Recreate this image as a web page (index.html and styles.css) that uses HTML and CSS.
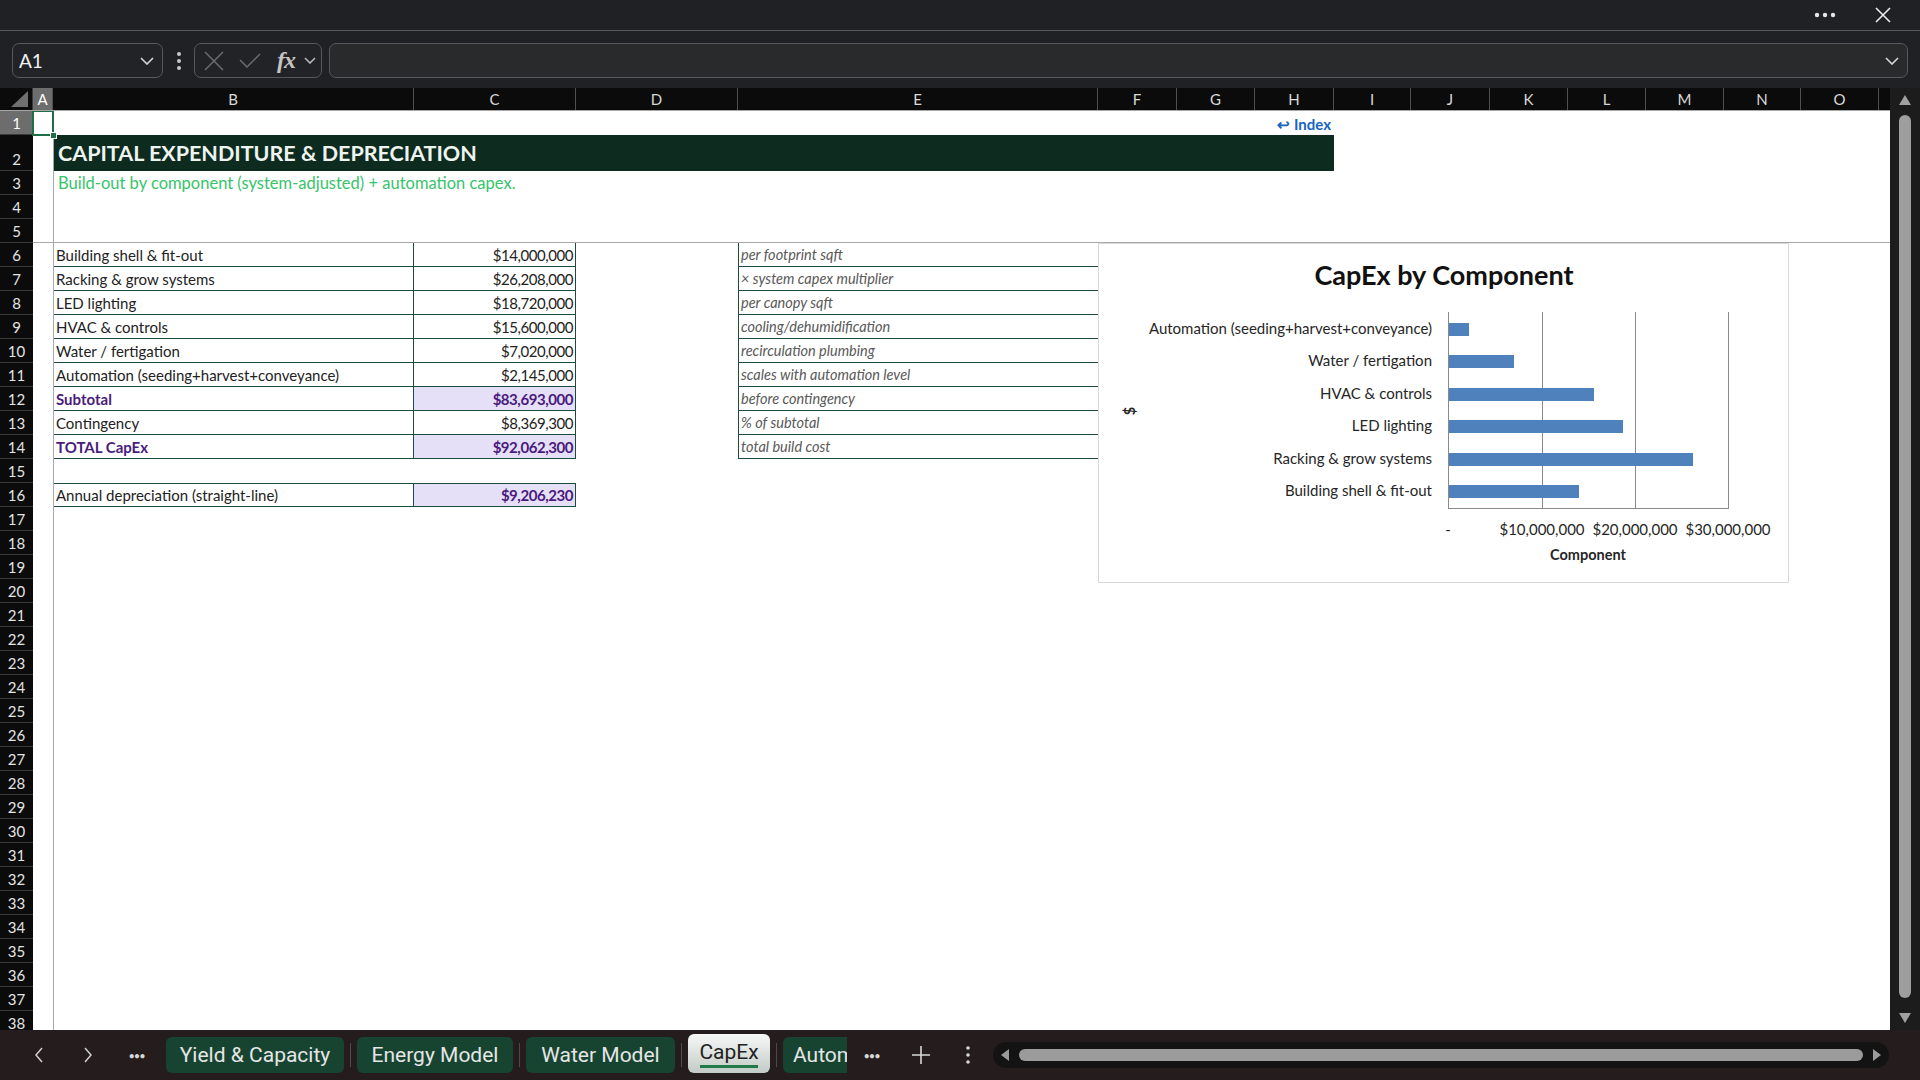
FILE: index.html
```html
<!DOCTYPE html>
<html lang="en">
<head>
    <meta charset="UTF-8">
    <meta name="viewport" content="width=device-width, initial-scale=1.0">
    <title>CapEx</title>
    <link rel="stylesheet" href="styles.css">
</head>
<body>
    <!-- window top -->
    <div class="titlebar">
        <svg class="more" width="22" height="6" viewBox="0 0 22 6"><circle cx="3" cy="3" r="2.2"/><circle cx="11" cy="3" r="2.2"/><circle cx="19" cy="3" r="2.2"/></svg>
        <svg class="close" width="18" height="18" viewBox="0 0 18 18"><path d="M2 2L16 16M16 2L2 16"/></svg>
    </div>

    <!-- formula bar -->
    <div class="formulabar">
        <div class="namebox">
            <span>A1</span>
            <svg class="chev" width="14" height="8" viewBox="0 0 14 8"><polyline points="1,1 7,7 13,1"/></svg>
        </div>
        <div class="vdots">
            <svg width="6" height="20" viewBox="0 0 6 20"><circle cx="3" cy="3" r="2"/><circle cx="3" cy="10" r="2"/><circle cx="3" cy="17" r="2"/></svg>
        </div>
        <div class="fxbox">
            <svg class="fx-x" width="20" height="20" viewBox="0 0 20 20"><path d="M1 1L19 19M19 1L1 19"/></svg>
            <svg class="fx-ok" width="22" height="17" viewBox="0 0 22 17"><polyline points="1,8 8,15 21,2"/></svg>
            <span class="fx">fx</span>
            <svg class="chev small" width="12" height="7" viewBox="0 0 12 7"><polyline points="1,1 6,6 11,1"/></svg>
        </div>
        <div class="fxinput">
            <svg class="chev" width="14" height="8" viewBox="0 0 14 8"><polyline points="1,1 7,7 13,1"/></svg>
        </div>
    </div>

    <!-- sheet -->
    <div class="sheet">
        <div class="grid">
            <div class="colheads">
                <div class="corner"><svg width="18" height="16" viewBox="0 0 18 16"><polygon points="17,0 17,16 0,16"/></svg></div>
                <div class="ch w-a sel">A</div>
                <div class="ch w-b">B</div>
                <div class="ch w-c">C</div>
                <div class="ch w-c">D</div>
                <div class="ch w-e">E</div>
                <div class="ch w-79">F</div>
                <div class="ch w-78">G</div>
                <div class="ch w-79">H</div>
                <div class="ch w-77">I</div>
                <div class="ch w-79">J</div>
                <div class="ch w-78">K</div>
                <div class="ch w-78">L</div>
                <div class="ch w-78">M</div>
                <div class="ch w-77">N</div>
                <div class="ch w-78">O</div>
                <div class="ch w-p"></div>
            </div>
            <div class="body">
                <div class="rowheads">
                    <div class="rh sel">1</div>
                    <div class="rh tall">2</div>
                    <div class="rh">3</div>
                    <div class="rh">4</div>
                    <div class="rh">5</div>
                    <div class="rh">6</div>
                    <div class="rh">7</div>
                    <div class="rh">8</div>
                    <div class="rh">9</div>
                    <div class="rh">10</div>
                    <div class="rh">11</div>
                    <div class="rh">12</div>
                    <div class="rh">13</div>
                    <div class="rh">14</div>
                    <div class="rh">15</div>
                    <div class="rh">16</div>
                    <div class="rh">17</div>
                    <div class="rh">18</div>
                    <div class="rh">19</div>
                    <div class="rh">20</div>
                    <div class="rh">21</div>
                    <div class="rh">22</div>
                    <div class="rh">23</div>
                    <div class="rh">24</div>
                    <div class="rh">25</div>
                    <div class="rh">26</div>
                    <div class="rh">27</div>
                    <div class="rh">28</div>
                    <div class="rh">29</div>
                    <div class="rh">30</div>
                    <div class="rh">31</div>
                    <div class="rh">32</div>
                    <div class="rh">33</div>
                    <div class="rh">34</div>
                    <div class="rh">35</div>
                    <div class="rh">36</div>
                    <div class="rh">37</div>
                    <div class="rh">38</div>
                </div>

                <div class="cells">
                    <div class="row r1">
                        <div class="a1"><span class="handle"></span></div>
                        <div class="index-link">↩ Index</div>
                    </div>
                    <div class="row r2">
                        <div class="banner">CAPITAL EXPENDITURE &amp; DEPRECIATION</div>
                    </div>
                    <div class="row r3">
                        <div class="subtitle">Build-out by component (system-adjusted) + automation capex.</div>
                    </div>
                    <div class="row r45"></div>

                    <div class="block">
                        <div class="tbl">
                            <div class="tr"><div class="td lbl">Building shell &amp; fit-out</div><div class="td num">$14,000,000</div></div>
                            <div class="tr"><div class="td lbl">Racking &amp; grow systems</div><div class="td num">$26,208,000</div></div>
                            <div class="tr"><div class="td lbl">LED lighting</div><div class="td num">$18,720,000</div></div>
                            <div class="tr"><div class="td lbl">HVAC &amp; controls</div><div class="td num">$15,600,000</div></div>
                            <div class="tr"><div class="td lbl">Water / fertigation</div><div class="td num">$7,020,000</div></div>
                            <div class="tr"><div class="td lbl">Automation (seeding+harvest+conveyance)</div><div class="td num">$2,145,000</div></div>
                            <div class="tr total"><div class="td lbl">Subtotal</div><div class="td num hl">$83,693,000</div></div>
                            <div class="tr"><div class="td lbl">Contingency</div><div class="td num">$8,369,300</div></div>
                            <div class="tr total"><div class="td lbl">TOTAL CapEx</div><div class="td num hl">$92,062,300</div></div>
                            <div class="tr empty"></div>
                            <div class="tr boxed"><div class="td lbl">Annual depreciation (straight-line)</div><div class="td num hl bold">$9,206,230</div></div>
                        </div>

                        <div class="notes">
                            <div class="note">per footprint sqft</div>
                            <div class="note">× system capex multiplier</div>
                            <div class="note">per canopy sqft</div>
                            <div class="note">cooling/dehumidification</div>
                            <div class="note">recirculation plumbing</div>
                            <div class="note">scales with automation level</div>
                            <div class="note">before contingency</div>
                            <div class="note">% of subtotal</div>
                            <div class="note">total build cost</div>
                        </div>

                        <!-- chart object -->
                        <div class="chart">
                            <svg width="689" height="338" viewBox="0 0 689 338">
                                <text class="c-title" x="345" y="41">CapEx by Component</text>

                                <g class="c-grid">
                                    <line x1="349.5" y1="68" x2="349.5" y2="264"/>
                                    <line x1="443.5" y1="68" x2="443.5" y2="264"/>
                                    <line x1="536.5" y1="68" x2="536.5" y2="264"/>
                                    <line x1="629.5" y1="68" x2="629.5" y2="264"/>
                                    <line x1="349" y1="264.5" x2="630" y2="264.5"/>
                                </g>

                                <g class="c-bars">
                                    <rect x="350" y="79" width="20" height="13"/>
                                    <rect x="350" y="111" width="65" height="13"/>
                                    <rect x="350" y="144" width="145" height="13"/>
                                    <rect x="350" y="176" width="174" height="13"/>
                                    <rect x="350" y="209" width="244" height="13"/>
                                    <rect x="350" y="241" width="130" height="13"/>
                                </g>

                                <g class="c-cat">
                                    <text x="333" y="90">Automation (seeding+harvest+conveyance)</text>
                                    <text x="333" y="122">Water / fertigation</text>
                                    <text x="333" y="155">HVAC &amp; controls</text>
                                    <text x="333" y="187">LED lighting</text>
                                    <text x="333" y="220">Racking &amp; grow systems</text>
                                    <text x="333" y="252">Building shell &amp; fit-out</text>
                                </g>

                                <g class="c-tick">
                                    <text x="349" y="291">-</text>
                                    <text x="443" y="291">$10,000,000</text>
                                    <text x="536" y="291">$20,000,000</text>
                                    <text x="629" y="291">$30,000,000</text>
                                </g>

                                <text class="c-axis" x="489" y="316">Component</text>
                                <text class="c-axis" x="0" y="0" transform="translate(36 167) rotate(-90)">$</text>
                            </svg>
                        </div>
                    </div>
                </div>
            </div>
        </div>

        <div class="vscroll">
            <svg class="arr" width="12" height="10" viewBox="0 0 12 10"><polygon points="6,0 12,10 0,10"/></svg>
            <div class="vthumb"></div>
            <svg class="arr" width="12" height="10" viewBox="0 0 12 10"><polygon points="0,0 12,0 6,10"/></svg>
        </div>
    </div>

    <!-- sheet tabs -->
    <div class="tabbar">
        <div class="nav"><svg width="10" height="16" viewBox="0 0 10 16"><polyline points="8,1 2,8 8,15"/></svg></div>
        <div class="nav"><svg width="10" height="16" viewBox="0 0 10 16"><polyline points="2,1 8,8 2,15"/></svg></div>
        <div class="nav dots">•••</div>

        <div class="tab t-yield">Yield &amp; Capacity</div>
        <span class="sep"></span>
        <div class="tab t-energy">Energy Model</div>
        <span class="sep"></span>
        <div class="tab t-water">Water Model</div>
        <span class="sep"></span>
        <div class="tab active">CapEx</div>
        <span class="sep"></span>
        <div class="tab t-auto">Automation</div>

        <div class="nav dots">•••</div>
        <div class="nav"><svg width="18" height="18" viewBox="0 0 18 18"><path d="M9 0V18M0 9H18"/></svg></div>
        <div class="nav kebab"><svg width="6" height="20" viewBox="0 0 6 20"><circle cx="3" cy="3" r="1.8"/><circle cx="3" cy="10" r="1.8"/><circle cx="3" cy="17" r="1.8"/></svg></div>

        <div class="hscroll">
            <svg class="harr" width="8" height="12" viewBox="0 0 8 12"><polygon points="8,0 8,12 0,6"/></svg>
            <div class="hthumb"></div>
            <svg class="harr" width="8" height="12" viewBox="0 0 8 12"><polygon points="0,0 8,6 0,12"/></svg>
        </div>
    </div>
</body>
</html>
```

FILE: styles.css
```css
*{
    box-sizing: border-box;
    margin: 0;
    padding: 0;
}
body{
    width: 1920px;
    height: 1080px;
    overflow: hidden;
    background-color: #1f2124;
    font-family: Lato, "Liberation Sans", sans-serif;
}

/* top */
.titlebar{
    height: 31px;
    border-bottom: 1px solid #55575b;
    display: flex;
    align-items: center;
    justify-content: flex-end;
    padding-right: 28px;
}
.more{
    fill: #e6e6e6;
    margin-right: 38px;
}
.close path{
    stroke: #ececec;
    stroke-width: 1.6;
}

/* formula bar */
.formulabar{
    height: 57px;
    display: flex;
    align-items: flex-start;
    padding: 12px 12px 0 12px;
}
.namebox,.fxbox,.fxinput{
    height: 35px;
    border: 1px solid #56585c;
    border-radius: 7px;
    display: flex;
    align-items: center;
}
.namebox{
    width: 151px;
    background-color: #222327;
    padding: 0 8px 0 6px;
    justify-content: space-between;
    color: #f2f2f2;
    font-size: 19px;
}
.chev polyline{
    fill: none;
    stroke: #d8d8d8;
    stroke-width: 1.6;
}
.chev.small polyline{
    stroke: #b8b8b8;
}
.vdots{
    width: 31px;
    height: 35px;
    display: flex;
    align-items: center;
    justify-content: center;
}
.vdots circle{
    fill: #c8c8c8;
}
.fxbox{
    width: 128px;
    padding-left: 9px;
    background-color: #222327;
}
.fx-x path,.fx-ok polyline{
    fill: none;
    stroke: #6c6c6c;
    stroke-width: 1.5;
}
.fx-ok{
    margin-left: 15px;
}
.fx{
    margin-left: 16px;
    font-family: "Liberation Serif", serif;
    font-style: italic;
    font-weight: bold;
    font-size: 24px;
    color: #c4c4c4;
    letter-spacing: -1px;
}
.fxbox .chev{
    margin-left: 9px;
}
.fxinput{
    flex: 1;
    margin-left: 7px;
    background-color: #292a2c;
    justify-content: flex-end;
    padding-right: 8px;
}

/* sheet */
.sheet{
    height: 942px;
    display: flex;
}
.grid{
    width: 1890px;
    display: flex;
    flex-direction: column;
}
.colheads{
    height: 23px;
    display: flex;
    background-color: #0b0b0b;
    border-bottom: 1px solid #a6a6a6;
}
.corner{
    width: 33px;
    display: flex;
    align-items: flex-end;
    justify-content: flex-end;
    padding: 0 3px 3px 0;
    border-right: 1px solid #3c3c3c;
}
.corner polygon{
    fill: #6f6f6f;
}
.ch{
    color: #d9d9d9;
    font-size: 15px;
    line-height: 22px;
    text-align: center;
    border-right: 1px solid #4f4f4f;
}
.ch.sel{
    background-color: #6d6d6d;
    color: #fff;
}
.w-a{width: 20px;}
.w-b{width: 361px;}
.w-c{width: 162px;}
.w-e{width: 360px;}
.w-77{width: 77px;}
.w-78{width: 78px;}
.w-79{width: 79px;}
.w-p{width: 11px; border-right: none;}

.body{
    flex: 1;
    display: flex;
    overflow: hidden;
}
.rowheads{
    width: 33px;
    flex-shrink: 0;
    background-color: #0b0b0b;
}
.rh{
    height: 24px;
    border-bottom: 1px solid #3a3a3a;
    color: #e3e3e3;
    font-size: 15px;
    line-height: 24px;
    text-align: center;
}
.rh.tall{
    height: 36px;
    padding-top: 12px;
}
.rh.sel{
    background-color: #6d6d6d;
    color: #fff;
}

.cells{
    flex: 1;
    background: linear-gradient(#a8a8a8, #a8a8a8) 20px 0 / 1px 100% no-repeat, #fff;
    color: #222;
    font-size: 15px;
}
.row{
    display: flex;
}
.r1{
    height: 24px;
}
.a1{
    position: relative;
    width: 20px;
    height: 24px;
    outline: 2px solid #1f6e47;
    outline-offset: -1px;
}
.handle{
    position: absolute;
    right: -4px;
    bottom: -4px;
    width: 7px;
    height: 7px;
    background-color: #1f6e47;
    border: 1px solid #fff;
}
.index-link{
    width: 1281px;
    text-align: right;
    padding-right: 3px;
    line-height: 26px;
    color: #1565c0;
    font-weight: bold;
    font-size: 15px;
}
.r2{
    height: 36px;
}
.banner{
    margin-left: 21px;
    width: 1280px;
    background-color: #0d2b1f;
    color: #eef4f0;
    font-weight: bold;
    font-size: 21.5px;
    line-height: 36px;
    padding-left: 4px;
}
.r3{
    height: 24px;
}
.subtitle{
    padding-left: 25px;
    line-height: 24px;
    color: #37c46b;
    font-size: 16.5px;
}
.r45{
    height: 48px;
    border-bottom: 1px solid #a8a8a8;
}

/* table block */
.block{
    display: flex;
    align-items: flex-start;
    padding-left: 21px;
}
.tbl{
    width: 522px;
}
.tr{
    display: flex;
    height: 24px;
    border-bottom: 1px solid #1e4c3a;
}
.tr.empty{
    border-bottom: none;
}
.tr.boxed{
    border-top: 1px solid #1e4c3a;
}
.td{
    line-height: 24px;
    border-right: 1px solid #1e4c3a;
    white-space: nowrap;
}
.tr.boxed .td{
    line-height: 22px;
}
.lbl{
    width: 360px;
    padding-left: 2px;
}
.num{
    width: 162px;
    text-align: right;
    padding-right: 2px;
    letter-spacing: -0.45px;
}
.hl{
    background-color: #e5e0f7;
}
.total .td{
    color: #4a1b7d;
    font-weight: bold;
}
.bold{
    color: #4a1b7d;
    font-weight: bold;
}
.notes{
    width: 360px;
    margin-left: 162px;
    border-left: 1px solid #1e4c3a;
}
.note{
    height: 24px;
    border-bottom: 1px solid #1e4c3a;
    line-height: 24px;
    padding-left: 2px;
    font-style: italic;
    font-size: 14.5px;
    color: #595959;
}
.chart{
    width: 691px;
    height: 340px;
    flex-shrink: 0;
    border: 1px solid #d9d9d9;
    background-color: #fff;
}
.chart text{
    font-family: Lato, "Liberation Sans", sans-serif;
    fill: #262626;
}
.c-title{
    font-size: 27px;
    font-weight: bold;
    text-anchor: middle;
    fill: #111 !important;
}
.c-grid line{
    stroke: #8a8a8a;
    stroke-width: 1;
}
.c-bars rect{
    fill: #4f81bd;
}
.c-cat text{
    font-size: 15px;
    text-anchor: end;
}
.c-tick text{
    font-size: 15px;
    text-anchor: middle;
}
.c-axis{
    font-size: 14.5px;
    font-weight: bold;
    text-anchor: middle;
}

/* right scrollbar */
.vscroll{
    width: 30px;
    background-color: #1c1c1c;
    display: flex;
    flex-direction: column;
    align-items: center;
    padding: 7px 0 6px;
}
.arr polygon{
    fill: #a0a0a0;
}
.vthumb{
    width: 12px;
    height: 883px;
    margin: 10px 0 15px;
    border-radius: 6px;
    background-color: #9e9e9e;
}

/* tabs */
.tabbar{
    height: 50px;
    background-color: #251d1d;
    display: flex;
    align-items: center;
    padding-left: 14px;
    color: #e6e6e6;
}
.nav{
    width: 49px;
    height: 36px;
    display: flex;
    align-items: center;
    justify-content: center;
    flex-shrink: 0;
}
.nav polyline{
    fill: none;
    stroke: #cfcfcf;
    stroke-width: 1.5;
}
.nav path{
    stroke: #d8d8d8;
    stroke-width: 1.6;
}
.nav.dots{
    font-size: 11px;
    letter-spacing: -1px;
    color: #d8d8d8;
}
.kebab{
    width: 46px;
}
.kebab circle{
    fill: #d8d8d8;
}
.tab{
    height: 36px;
    border-radius: 6px;
    background-color: #164430;
    font-family: Roboto, "Liberation Sans", sans-serif;
    font-size: 21px;
    line-height: 36px;
    text-align: center;
    white-space: nowrap;
    flex-shrink: 0;
}
.t-yield{
    width: 178px;
    margin-left: 5px;
}
.t-energy{width: 156px;}
.t-water{width: 149px;}
.t-auto{
    width: 64px;
    overflow: hidden;
    text-align: left;
    padding-left: 10px;
    border-radius: 6px 0 0 6px;
}
.tab.active{
    width: 82px;
    height: 39px;
    margin-top: -3px;
    line-height: 36px;
    color: #222;
    background: linear-gradient(#f6f8f7, #c3cbc6);
    border-radius: 6px;
    position: relative;
}
.tab.active::after{
    content: "";
    position: absolute;
    left: 12px;
    right: 12px;
    bottom: 5px;
    height: 3px;
    background-color: #1e7b47;
}
.sep{
    width: 1px;
    height: 24px;
    margin: 0 6px;
    background-color: #524848;
    flex-shrink: 0;
}
.hscroll{
    width: 896px;
    height: 26px;
    margin-left: 2px;
    border-radius: 13px;
    background-color: #131313;
    display: flex;
    align-items: center;
    padding: 0 8px;
}
.harr polygon{
    fill: #9b9b9b;
}
.hthumb{
    flex: 1;
    height: 12px;
    margin: 0 10px 0 10px;
    border-radius: 6px;
    background-color: #9b9b9b;
}
```
